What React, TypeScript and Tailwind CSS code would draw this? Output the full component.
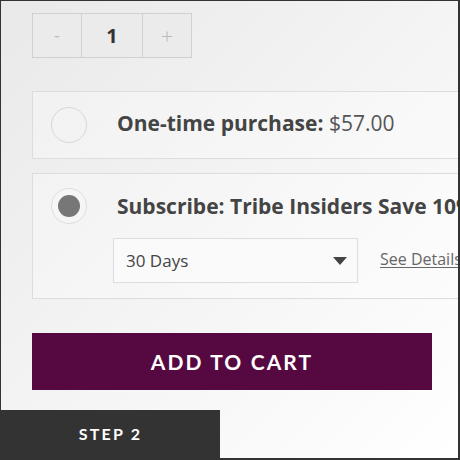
export default function App() {
  return (
    <div
      className="relative w-[460px] h-[460px] overflow-hidden border-t border-l border-r-2 border-b-2 border-[#333] bg-linear-to-br from-[#e9e9e9] via-[#f4f4f4] to-white text-[#444]"
      style={{ fontFamily: "'Open Sans', 'Noto Sans', sans-serif" }}
    >
      <div className="pl-[31px] pt-[12px] flex flex-col">
        {/* Quantity */}
        <div className="flex h-[45px] w-[160px] border border-[#d0d0d0] bg-[#ebebeb]">
          <div className="w-[49px] flex items-center justify-center text-[#bbb] text-[18px] border-r border-[#d0d0d0]">
            -
          </div>
          <div className="w-[61px] flex items-center justify-center font-bold text-[20px] text-[#333] border-r border-[#d0d0d0]">
            1
          </div>
          <div className="flex-1 flex items-center justify-center text-[#bbb] text-[22px] font-light">
            +
          </div>
        </div>

        {/* One-time */}
        <div className="mt-[33px] w-[480px] h-[68px] border border-[#ddd] bg-white/30 flex items-center">
          <div className="shrink-0 ml-[18px] w-[36px] h-[36px] rounded-full border border-[#d6d6d6] bg-[#f3f3f3]" />
          <div className="ml-[30px] mb-[3px] text-[21px] leading-none whitespace-nowrap">
            <span className="font-bold text-[#444]">One-time purchase:</span>{" "}
            <span className="text-[#555]">$57.00</span>
          </div>
        </div>

        {/* Subscribe */}
        <div className="mt-[14px] w-[480px] h-[126px] border border-[#ddd] bg-white/30 flex flex-col">
          <div className="flex items-center mt-[14px]">
            <div className="shrink-0 ml-[18px] w-[36px] h-[36px] rounded-full border border-[#ddd] bg-[#f6f6f6] flex items-center justify-center">
              <div className="w-[22px] h-[22px] rounded-full bg-[#777]" />
            </div>
            <div className="ml-[30px] text-[21px] leading-none font-bold whitespace-nowrap text-[#444]">
              Subscribe: Tribe Insiders Save 10%
            </div>
          </div>
          <div className="flex items-center mt-[14px] ml-[80px]">
            <div className="shrink-0 w-[245px] h-[45px] border border-[#ddd] bg-[#fafafa] flex items-center justify-between pl-[12px] pr-[10px]">
              <span className="text-[17px] text-[#444]">30 Days</span>
              <svg width="14" height="8" viewBox="0 0 14 8">
                <polygon points="0,0 14,0 7,8" fill="#444" />
              </svg>
            </div>
            <span className="ml-[22px] mb-[3px] text-[16px] text-[#666] underline underline-offset-2 whitespace-nowrap">
              See Details
            </span>
          </div>
        </div>

        {/* Button */}
        <button
          className="mt-[34px] w-[400px] h-[57px] bg-[#560840] text-white font-bold text-[21px] tracking-[0.1em] flex items-center justify-center"
          style={{ fontFamily: "Lato, sans-serif" }}
        >
          ADD TO CART
        </button>
      </div>

      <div
        className="absolute left-0 bottom-0 w-[219px] h-[48px] bg-[#333] text-white font-bold text-[16px] tracking-[0.14em] flex items-center justify-center"
        style={{ fontFamily: "Lato, sans-serif" }}
      >
        STEP 2
      </div>
    </div>
  );
}
